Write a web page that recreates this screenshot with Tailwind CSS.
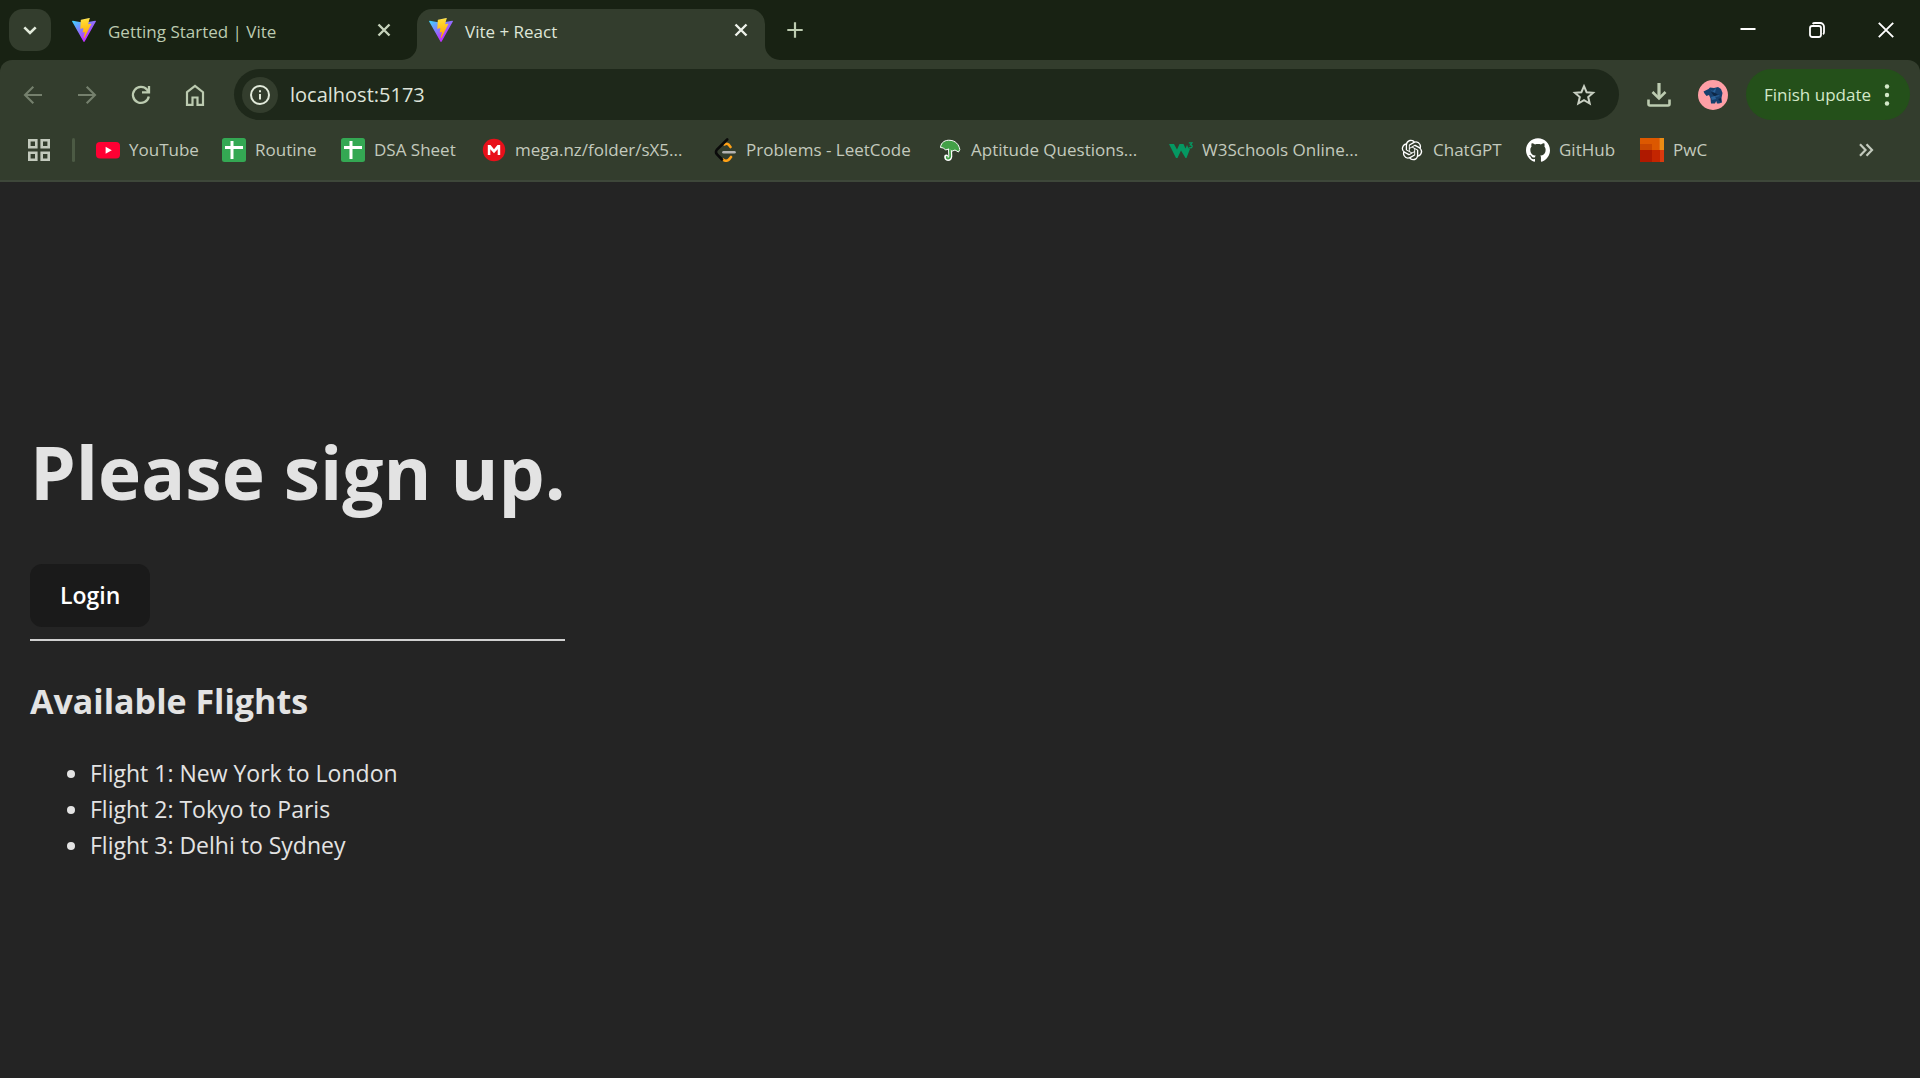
<!DOCTYPE html>
<html lang="en">
<head>
<meta charset="utf-8">
<meta name="viewport" content="width=device-width, initial-scale=1">
<title>Vite + React</title>
<script src="https://cdn.jsdelivr.net/npm/@tailwindcss/browser@4"></script>
</head>
<body class="flex min-h-screen flex-col bg-[#242424] font-['Open_Sans',sans-serif]">

<svg class="absolute size-0" aria-hidden="true">
  <defs>
    <linearGradient id="va" x1="0%" x2="57.6%" y1="7.6%" y2="78.4%"><stop offset="0" stop-color="#41D1FF"/><stop offset="1" stop-color="#BD34FE"/></linearGradient>
    <linearGradient id="vb" x1="43.4%" x2="50.3%" y1="2.2%" y2="89%"><stop offset="0" stop-color="#FFEA83"/><stop offset=".083" stop-color="#FFDD35"/><stop offset="1" stop-color="#FFA800"/></linearGradient>
  </defs>
</svg>

<!-- Tab strip -->
<header class="flex h-[60px] shrink-0 items-start bg-[#182213] pl-[9px] pt-[9px]">
  <button aria-label="Search tabs" class="flex size-[42px] shrink-0 items-center justify-center rounded-[14px] bg-[#333d2d]">
    <svg class="size-6" viewBox="0 0 24 24" fill="none" stroke="#e2eadb" stroke-width="2.6"><path d="M6.3 9.3l5.7 5.7 5.7-5.7"/></svg>
  </button>
  <nav aria-label="Tabs" class="flex h-[51px]">
    <div class="flex h-[42px] w-[366px] items-center pl-[21px] pr-[21px]">
      <svg class="size-6 shrink-0" viewBox="0 0 256 257"><path fill="url(#va)" d="M255.153 37.938L134.897 252.976c-2.483 4.44-8.862 4.466-11.382.048L.875 37.958c-2.746-4.814 1.371-10.646 6.827-9.67l120.385 21.517a6.537 6.537 0 0 0 2.322-.004l117.867-21.483c5.438-.991 9.574 4.796 6.877 9.62Z"/><path fill="url(#vb)" d="M185.432.063L96.44 17.501a3.268 3.268 0 0 0-2.634 3.014l-5.474 92.456a3.268 3.268 0 0 0 3.997 3.378l24.777-5.718c2.318-.535 4.413 1.507 3.936 3.838l-7.361 36.047c-.495 2.426 1.782 4.5 4.151 3.78l15.304-4.649c2.372-.72 4.652 1.36 4.15 3.788l-11.698 56.621c-.732 3.542 3.979 5.473 5.943 2.437l1.313-2.028l72.516-144.72c1.215-2.423-.88-5.186-3.54-4.672l-25.505 4.922c-2.396.462-4.435-1.77-3.759-4.114l16.646-57.705c.677-2.35-1.37-4.583-3.769-4.113Z"/></svg>
      <a href="#" class="ml-3 flex-1 whitespace-nowrap pt-1 text-[17px] leading-6 text-[#bccbb0]">Getting Started | Vite</a>
      <button aria-label="Close tab" class="size-6"><svg viewBox="0 0 24 24" fill="none" stroke="#c6d2bb" stroke-width="2.4"><path d="M6.500 6.500l11 11M17.500 6.500l-11 11"/></svg></button>
    </div>
    <div class="relative flex h-[51px] w-[348px] items-start rounded-t-[15px] bg-[#333d2d] pl-3 pr-3">
      <svg class="absolute bottom-0 -left-[15px] size-[15px]" viewBox="0 0 15 15" fill="#333d2d"><path d="M15 0v15H0A15 15 0 0 0 15 0z"/></svg>
      <svg class="absolute bottom-0 -right-[15px] size-[15px]" viewBox="0 0 15 15" fill="#333d2d"><path d="M0 0v15h15A15 15 0 0 1 0 0z"/></svg>
      <div class="flex h-[42px] w-full items-center">
        <svg class="size-6 shrink-0" viewBox="0 0 256 257"><path fill="url(#va)" d="M255.153 37.938L134.897 252.976c-2.483 4.44-8.862 4.466-11.382.048L.875 37.958c-2.746-4.814 1.371-10.646 6.827-9.67l120.385 21.517a6.537 6.537 0 0 0 2.322-.004l117.867-21.483c5.438-.991 9.574 4.796 6.877 9.62Z"/><path fill="url(#vb)" d="M185.432.063L96.44 17.501a3.268 3.268 0 0 0-2.634 3.014l-5.474 92.456a3.268 3.268 0 0 0 3.997 3.378l24.777-5.718c2.318-.535 4.413 1.507 3.936 3.838l-7.361 36.047c-.495 2.426 1.782 4.5 4.151 3.78l15.304-4.649c2.372-.72 4.652 1.36 4.15 3.788l-11.698 56.621c-.732 3.542 3.979 5.473 5.943 2.437l1.313-2.028l72.516-144.72c1.215-2.423-.88-5.186-3.54-4.672l-25.505 4.922c-2.396.462-4.435-1.77-3.759-4.114l16.646-57.705c.677-2.35-1.37-4.583-3.769-4.113Z"/></svg>
        <a href="#" aria-current="page" class="ml-3 flex-1 whitespace-nowrap pt-1 text-[17px] leading-6 text-[#dfe6d8]">Vite + React</a>
        <button aria-label="Close tab" class="size-6"><svg viewBox="0 0 24 24" fill="none" stroke="#eef2ea" stroke-width="2.4"><path d="M6.500 6.500l11 11M17.500 6.500l-11 11"/></svg></button>
      </div>
    </div>
  </nav>
  <button aria-label="New tab" class="ml-[18px] flex h-[42px] w-6 items-center"><svg class="size-6" viewBox="0 0 24 24" fill="none" stroke="#bccbb0" stroke-width="2.2"><path d="M12 4.3v15.4M4.3 12h15.4"/></svg></button>
  <div class="ml-auto flex h-[42px]">
    <button aria-label="Minimize" class="flex w-[69px] items-center justify-center"><svg class="size-4" viewBox="0 0 16 16" stroke="#fff" stroke-width="2"><path d="M.5 7h15"/></svg></button>
    <button aria-label="Restore" class="flex w-[69px] items-center justify-center"><svg class="size-4" viewBox="0 0 16 16" fill="none" stroke="#fff" stroke-width="1.8"><rect x="1" y="4" width="11" height="11" rx="2.2"/><path d="M3.6 1.9Q4.3 1 6 1h5.2A3.8 3.8 0 0 1 15 4.800V10q0 1.700-.9 2.400"/></svg></button>
    <button aria-label="Close window" class="flex w-[69px] items-center justify-center"><svg class="size-4" viewBox="0 0 16 16" stroke="#fff" stroke-width="1.900"><path d="M.8.800l14.400 14.400M15.200.800L.8 15.200"/></svg></button>
  </div>
</header>

<div class="shrink-0 bg-[#182213]">
<div class="rounded-t-[12px] border-b-2 border-[#3e473a] bg-[#333d2d]">
  <!-- Address bar row -->
  <div class="flex items-center pl-[6px] pr-[10px] pt-[9px]">
    <div class="flex shrink-0">
      <button aria-label="Back" class="flex w-[54px] items-center justify-center"><svg class="size-6" viewBox="0 0 24 24" fill="none" stroke="#75806d" stroke-width="2.100"><path d="M21 12H4.500M12.300 3.700L4 12l8.300 8.300"/></svg></button>
      <button aria-label="Forward" class="flex w-[54px] items-center justify-center"><svg class="size-6" viewBox="0 0 24 24" fill="none" stroke="#75806d" stroke-width="2.100"><path d="M3 12h16.500M11.700 3.700L20 12l-8.300 8.300"/></svg></button>
      <button aria-label="Reload" class="flex w-[54px] items-center justify-center"><svg class="size-6" viewBox="0 0 24 24" fill="none" stroke="#bccbb0" stroke-width="2.300"><path d="M19.800 13.500a8 8 0 1 1-1.700-6.700l1.900 2.200M20 3v6.300h-7"/></svg></button>
      <button aria-label="Home" class="flex w-[54px] items-center justify-center"><svg class="size-6" viewBox="0 0 24 24" fill="none" stroke="#bccbb0" stroke-width="2.200"><path d="M4 9.200L12 3l8 6.200V21.900h-5.500v-7.400h-5v7.400H4z"/></svg></button>
    </div>
    <div class="ml-3 flex h-[51px] min-w-0 flex-1 items-center rounded-full bg-[#1e281a] pl-2 pr-[23px]">
      <button aria-label="Site information" class="flex size-9 shrink-0 items-center justify-center rounded-full bg-[#333d2d]"><svg class="size-5" viewBox="0 0 20 20" fill="none" stroke="#e2eadb" stroke-width="2"><circle cx="10" cy="10" r="9"/><path d="M10 9v5.500M10 5.200v2"/></svg></button>
      <input aria-label="Address" type="text" value="localhost:5173" class="ml-3 min-w-0 flex-1 bg-transparent text-[20px] leading-7 text-[#dfe4da] outline-none">
      <button aria-label="Bookmark this page"><svg class="size-6" viewBox="0 0 24 24" fill="none" stroke="#c9d0c3" stroke-width="2"><path d="M12 3.200l2.600 6 6.500.6-4.900 4.300 1.500 6.400L12 17.100l-5.700 3.400 1.500-6.400-4.900-4.300 6.500-.6z"/></svg></button>
    </div>
    <button aria-label="Downloads" class="ml-7"><svg class="size-6" viewBox="0 0 24 24" fill="none" stroke="#bccbb0" stroke-width="3"><path d="M12 0v15" stroke-width="3.200"/><path d="M5.500 9l6.500 6.500L18.500 9M1.500 16.500V21q0 1.500 1.500 1.500h18q1.500 0 1.500-1.500v-4.500" stroke-width="2.600"/></svg></button>
    <button aria-label="Profile" class="ml-[27px] shrink-0"><svg class="size-[30px]" viewBox="0 0 30 30"><circle cx="15" cy="15" r="15" fill="#ff9fa6"/><path fill="#17406e" d="M5.500 11.500l5-2.500 1.500-1.500 4 .5 4-1 3 2 1.500 4-1 5 .5 4.500-3 1h-2l-.8-2.500-1.200 2.500h-4l-.5-5-1.500-3.500-2.500 1-2-2.500z"/><path fill="#2a6299" d="M11 9l4 2 3-3-1 5zM19 14l3 2-5 1zM13 17l4-1 1 3-4 1z"/><path fill="#0d2746" d="M13 12l3 4 5-1-4-2zM20 19l3-1v4z"/></svg></button>
    <button class="ml-[18px] flex h-[51px] shrink-0 items-center rounded-full bg-[#24501a] pl-[18px] pr-[11px] text-[17px] text-[#d3e8c8]">Finish update<svg class="ml-1 size-6" viewBox="0 0 24 24" fill="#d3e8c8"><circle cx="12" cy="3.500" r="2.200"/><circle cx="12" cy="12" r="2.200"/><circle cx="12" cy="20.500" r="2.200"/></svg></button>
  </div>

  <!-- Bookmarks bar -->
  <nav aria-label="Bookmarks" class="flex h-[60px] items-center whitespace-nowrap pl-[27px] text-[17px] leading-6 text-[#c3cabd]">
    <button aria-label="Apps" class="shrink-0"><svg class="size-6" viewBox="0 0 24 24" fill="none" stroke="#c3cabd" stroke-width="2.600"><path d="M2.300 2.300h7v7h-7zM14.700 2.300h7v7h-7zM2.300 14.700h7v7h-7zM14.700 14.700h7v7h-7z"/></svg></button>
    <span class="ml-[21px] mr-[21px] h-6 w-[3px] shrink-0 rounded-full bg-[#4c5a44]"></span>
    <a href="#" class="flex w-[126px] shrink-0 items-center gap-[9px]"><svg class="size-6" viewBox="0 0 24 24"><rect y="4" width="24" height="16.500" rx="4" fill="#ff0033"/><path fill="#fff" d="M9.600 8.700v7l6.200-3.500z"/></svg>YouTube</a>
    <a href="#" class="flex w-[119px] shrink-0 items-center gap-[9px]"><svg class="size-6" viewBox="0 0 24 24"><rect width="24" height="24" rx="2.500" fill="#34a853"/><path fill="#fff" d="M8.500 3h3v5H21v3h-9.500v10h-3V11H3V8h5.500z"/></svg>Routine</a>
    <a href="#" class="flex w-[141px] shrink-0 items-center gap-[9px]"><svg class="size-6" viewBox="0 0 24 24"><rect width="24" height="24" rx="2.500" fill="#34a853"/><path fill="#fff" d="M8.500 3h3v5H21v3h-9.500v10h-3V11H3V8h5.500z"/></svg>DSA Sheet</a>
    <a href="#" class="flex w-[231px] shrink-0 items-center gap-[9px]"><svg class="size-6" viewBox="0 0 24 24"><circle cx="12" cy="12" r="11.200" fill="#e8101a"/><path fill="#fff" d="M5.800 17V7h2.700l3.500 4.200L15.500 7h2.700v10h-2.500v-5.700L12 15.300l-3.700-4V17z"/></svg>mega.nz/folder/sX5...</a>
    <a href="#" class="flex w-[225px] shrink-0 items-center gap-[9px]"><svg class="size-6" viewBox="0 0 24 24" fill="none" stroke-width="2.600" stroke-linecap="round"><path stroke="#ffa116" d="M11.500 6.500q2-1.500 4 0l2 2.500M10 21.500q3 2.500 6 0l2-2.500"/><path stroke="#0a0a0a" d="M14.200 1.500L4 11.500q-2 2.500 0 5l5 5"/><path stroke="#b3b3b3" d="M10.500 14.300h11"/></svg>Problems - LeetCode</a>
    <a href="#" class="flex w-[231px] shrink-0 items-center gap-[9px]"><svg class="size-6" viewBox="0 0 24 24"><path fill="none" stroke="#fff" stroke-width="4" stroke-linecap="round" d="M12 11l.3 7.500q-.3 2.500-2.300 2.500-2 0-1.800-2.500"/><path fill="#43a047" stroke="#fff" stroke-width="1" d="M2.500 9.500C3 4 7.500 1.800 12 2.300c5.500.3 9 4.300 9.800 9.200l-1.300 2.500-3.500-2-3 1.200-3.200-2.200-3.300 1-2-2z"/><path fill="none" stroke="#43a047" stroke-width="1.800" stroke-linecap="round" d="M11.900 12l.3 6q-.2 2.500-2.200 2.600-1.400 0-1.200-1.700"/></svg>Aptitude Questions...</a>
    <a href="#" class="flex w-[231px] shrink-0 items-center gap-[9px]"><svg class="size-6" viewBox="0 0 24 24"><path fill="#059862" d="M0 6h5l3 5.500L10.500 6h4l2 4.500L18 7q1 3.500 3 4l-3.500 9h-1L12 12.500 8.500 20H7z"/><path fill="none" stroke="#059862" stroke-width="1.300" d="M19.800 4.800h3.200l-1.600 2.100q2 .2 1.700 1.800-.4 1.400-3.400 1"/></svg>W3Schools Online...</a>
    <a href="#" class="flex w-[126px] shrink-0 items-center gap-[9px]"><svg class="size-6" viewBox="-2 -2 28 28" fill="#fff"><path d="M22.2819 9.8211a5.9847 5.9847 0 0 0-.5157-4.9108 6.0462 6.0462 0 0 0-6.5098-2.9A6.0651 6.0651 0 0 0 4.9807 4.1818a5.9847 5.9847 0 0 0-3.9977 2.9 6.0462 6.0462 0 0 0 .7427 7.0966 5.98 5.98 0 0 0 .511 4.9107 6.051 6.051 0 0 0 6.5146 2.9001A5.9847 5.9847 0 0 0 13.2599 24a6.0557 6.0557 0 0 0 5.7718-4.2058 5.9894 5.9894 0 0 0 3.9977-2.9001 6.0557 6.0557 0 0 0-.7475-7.073zm-9.022 12.6081a4.4755 4.4755 0 0 1-2.8764-1.0408l.1419-.0804 4.7783-2.7582a.7948.7948 0 0 0 .3927-.6813v-6.7369l2.02 1.1686a.071.071 0 0 1 .038.052v5.5826a4.504 4.504 0 0 1-4.4945 4.4944zm-9.6607-4.1254a4.4708 4.4708 0 0 1-.5346-3.0137l.142.0852 4.783 2.7582a.7712.7712 0 0 0 .7806 0l5.8428-3.3685v2.3324a.0804.0804 0 0 1-.0332.0615L9.74 19.9502a4.4992 4.4992 0 0 1-6.1408-1.6464zM2.3408 7.8956a4.485 4.485 0 0 1 2.3655-1.9728V11.6a.7664.7664 0 0 0 .3879.6765l5.8144 3.3543-2.0201 1.1685a.0757.0757 0 0 1-.071 0l-4.8303-2.7865A4.504 4.504 0 0 1 2.3408 7.872zm16.5963 3.8558L13.1038 8.364 15.1192 7.2a.0757.0757 0 0 1 .071 0l4.8303 2.7913a4.4944 4.4944 0 0 1-.6765 8.1042v-5.6772a.79.79 0 0 0-.407-.667zm2.0107-3.0231l-.142-.0852-4.7735-2.7818a.7759.7759 0 0 0-.7854 0L9.409 9.2297V6.8974a.0662.0662 0 0 1 .0284-.0615l4.8303-2.7866a4.4992 4.4992 0 0 1 6.6802 4.66zM8.3065 12.863l-2.02-1.1638a.0804.0804 0 0 1-.038-.0567V6.0742a4.4992 4.4992 0 0 1 7.3757-3.4537l-.142.0805L8.704 5.459a.7948.7948 0 0 0-.3927.6813zm1.0976-2.3654l2.602-1.4998 2.6069 1.4998v2.9994l-2.5974 1.4997-2.6067-1.4997Z"/></svg>ChatGPT</a>
    <a href="#" class="flex w-[114px] shrink-0 items-center gap-[9px]"><svg class="size-6" viewBox="0 0 24 24" fill="#fff"><path d="M12 .297c-6.630 0-12 5.373-12 12 0 5.303 3.438 9.800 8.205 11.385.6.113.82-.258.82-.577 0-.285-.01-1.040-.015-2.040-3.338.724-4.042-1.610-4.042-1.610C4.422 18.070 3.633 17.700 3.633 17.700c-1.087-.744.084-.729.084-.729 1.205.084 1.838 1.236 1.838 1.236 1.070 1.835 2.809 1.305 3.495.998.108-.776.417-1.305.76-1.605-2.665-.3-5.466-1.332-5.466-5.930 0-1.310.465-2.380 1.235-3.220-.135-.303-.54-1.523.105-3.176 0 0 1.005-.322 3.300 1.230.96-.267 1.980-.399 3-.405 1.020.006 2.040.138 3 .405 2.280-1.552 3.285-1.230 3.285-1.230.645 1.653.24 2.873.12 3.176.765.840 1.230 1.910 1.230 3.220 0 4.610-2.805 5.625-5.475 5.920.42.360.81 1.096.81 2.220 0 1.606-.015 2.896-.015 3.286 0 .315.210.690.825.570C20.565 22.092 24 17.592 24 12.297c0-6.627-5.373-12-12-12"/></svg>GitHub</a>
    <a href="#" class="flex shrink-0 items-center gap-[9px]"><svg class="size-6" viewBox="0 0 24 24" shape-rendering="crispEdges"><path fill="#dc5800" d="M0 0h24v12H0z"/><path fill="#eb8c14" d="M20 0h4v12h-4z"/><path fill="#c84600" d="M0 6h12v6H0z"/><path fill="#af1900" d="M0 12h12v12H0z"/><path fill="#c42500" d="M12 12h8v12h-8z"/><path fill="#d93a0e" d="M20 12h4v12h-4z"/><path fill="#e06a10" d="M19 0h1v12h-1z"/></svg>PwC</a>
    <button aria-label="More bookmarks" class="ml-auto mr-[42px] shrink-0"><svg class="size-6" viewBox="0 0 24 24" fill="none" stroke="#c3cabd" stroke-width="2.200"><path d="M6 6.300l5.500 5.700L6 17.700M12.500 6.300L18 12l-5.500 5.700"/></svg></button>
  </nav>
</div>
</div>

<!-- Page -->
<main class="flex flex-1 items-center px-[30px] pt-8 text-[23px] leading-9 text-[#e3e3e3]">
  <div class="w-fit">
    <h1 class="text-[73px] font-bold leading-[84px]">Please sign up.</h1>
    <button class="mt-[50px] block h-[63px] rounded-xl bg-[#1a1a1a] px-[30px] font-semibold text-white">Login</button>
    <hr class="mt-3 border-t-2 border-[#d0d0d0]">
    <h2 class="mt-9 text-[34px] font-bold leading-[48px]">Available Flights</h2>
    <ul class="mt-[30px] list-disc pl-[60px]">
      <li>Flight 1: New York to London</li>
      <li>Flight 2: Tokyo to Paris</li>
      <li>Flight 3: Delhi to Sydney</li>
    </ul>
  </div>
</main>
</body>
</html>
